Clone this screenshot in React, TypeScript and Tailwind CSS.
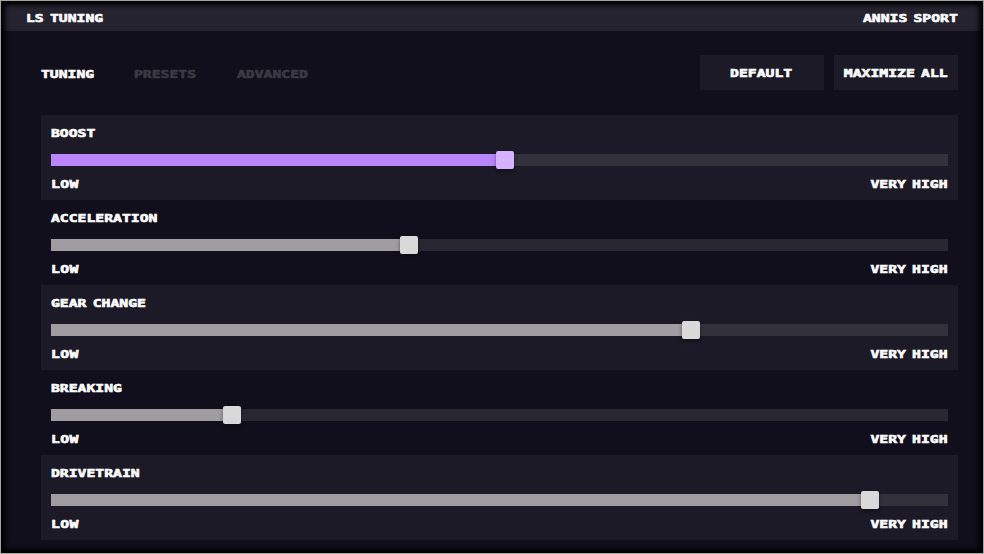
type LabelProps = { text: string; className?: string };

// Wide, blocky display lettering: a bold monospace stretched horizontally.
function Label({ text, className = "origin-left text-[#fcfcfd]" }: LabelProps) {
  return (
    <span
      className={`inline-block h-3 whitespace-nowrap font-['DejaVu_Sans_Mono',monospace] text-[11px] leading-[14px] font-bold [word-spacing:-2px] [-webkit-text-stroke:0.6px_currentColor] scale-x-[1.34] ${className}`}
    >
      {text}
    </span>
  );
}

type Setting = { name: string; value: number; active?: boolean };

const settings: Setting[] = [
  { name: "BOOST", value: 454, active: true },
  { name: "ACCELERATION", value: 358 },
  { name: "GEAR CHANGE", value: 640 },
  { name: "BREAKING", value: 181 },
  { name: "DRIVETRAIN", value: 819 },
];

const TRACK = 897;

function Slider({ value, active }: { value: number; active?: boolean }) {
  return (
    <div className="relative h-3 bg-white/10">
      <div
        className={`h-full ${active ? "bg-[#ba84ff]" : "bg-[#9f9da1]"}`}
        style={{ width: `${(value / TRACK) * 100}%` }}
      />
      <div
        className={`absolute -top-[3px] size-[18px] -translate-x-1/2 rounded-[2px] shadow-[0_2px_4px_rgba(0,0,0,0.4)] ${active ? "bg-[#d5b2ff]" : "bg-[#d9d9d9]"}`}
        style={{ left: `${(value / TRACK) * 100}%` }}
      />
    </div>
  );
}

function SettingRow({ name, value, active }: Setting) {
  return (
    <section className="h-[85px] px-2.5 pt-3 odd:bg-[#1c1a26]">
      <div className="flex h-[27px]">
        <Label text={name} />
      </div>
      <Slider value={value} active={active} />
      <div className="flex justify-between pt-3">
        <Label text="LOW" className="origin-left tracking-[0.3px] text-[#fcfcfd]" />
        <Label text="VERY HIGH" className="origin-right text-[#fcfcfd]" />
      </div>
    </section>
  );
}

export default function App() {
  return (
    <main className="relative flex h-[554px] w-[984px] flex-col overflow-hidden bg-[#110f1b]">
      <header className="flex h-[31px] items-start justify-between bg-[#25232f] pt-3 pr-[26px] pl-[26px]">
        <Label text="LS TUNING" />
        <Label text="ANNIS SPORT" className="origin-right text-[#fcfcfd]" />
      </header>
      <div className="flex items-start justify-between pt-6 pr-[26px] pl-[41px]">
        <nav className="flex pt-[13px]">
          <div className="flex w-[93px]">
            <Label text="TUNING" />
          </div>
          <div className="flex w-[103px]">
            <Label text="PRESETS" className="origin-left text-[#3b3944]" />
          </div>
          <div className="flex">
            <Label text="ADVANCED" className="origin-left text-[#3b3944]" />
          </div>
        </nav>
        <div className="flex gap-2.5">
          <button className="flex h-[35px] w-[124px] items-center justify-center bg-[#1c1a26] pr-0.5">
            <Label text="DEFAULT" className="origin-center text-[#fcfcfd]" />
          </button>
          <button className="flex h-[35px] w-[124px] items-center justify-center bg-[#1c1a26]">
            <Label text="MAXIMIZE ALL" className="origin-center text-[#fcfcfd]" />
          </button>
        </div>
      </div>
      <div className="pt-[25px] pr-[26px] pl-[41px]">
        {settings.map((s) => (
          <SettingRow key={s.name} {...s} />
        ))}
      </div>
      <div className="pointer-events-none absolute inset-0 border border-[#a2a5a2] shadow-[inset_0_0_5px_4px_#000]" />
    </main>
  );
}
